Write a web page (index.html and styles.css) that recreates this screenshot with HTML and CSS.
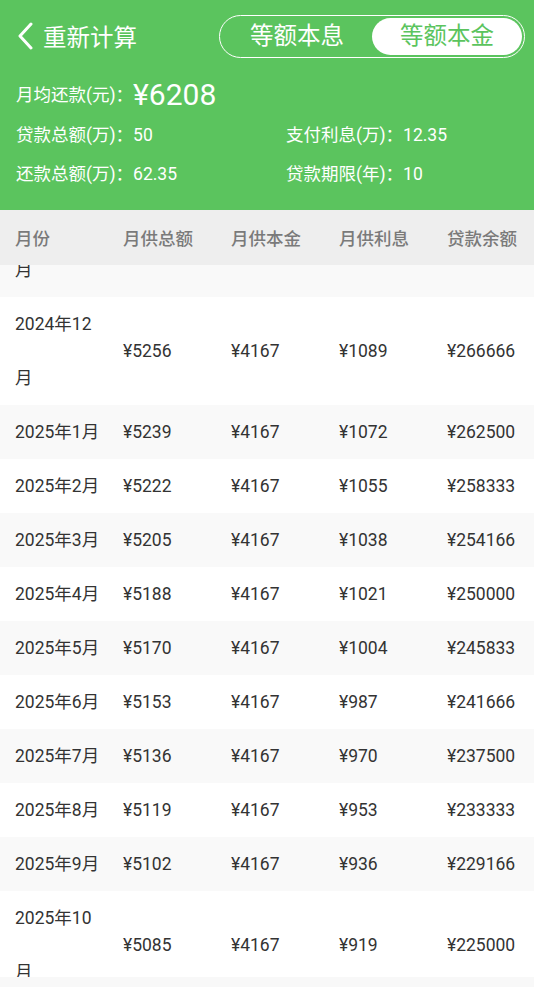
FILE: index.html
```html
<!DOCTYPE html>
<html lang="zh-CN">
<head>
    <meta charset="UTF-8">
    <meta name="viewport" content="width=device-width, initial-scale=1.0">
    <title>还款明细</title>
    <link rel="stylesheet" href="styles.css">
</head>
<body>
    <div class="summary">
        <div class="topbar">
            <div class="back">
                <svg width="17" height="28" viewBox="0 0 17 28">
                    <polyline points="14,2 3,14 14,26" fill="none" stroke="#fff" stroke-width="3" stroke-linecap="round" stroke-linejoin="round"/>
                </svg>
                <span>重新计算</span>
            </div>
            <div class="switch">
                <div class="tab">等额本息</div>
                <div class="tab active">等额本金</div>
            </div>
        </div>
        <div class="monthly">月均还款(元)：<span class="amount">¥6208</span></div>
        <div class="facts">
            <div>贷款总额(万)：50</div>
            <div>支付利息(万)：12.35</div>
            <div>还款总额(万)：62.35</div>
            <div>贷款期限(年)：10</div>
        </div>
    </div>

    <div class="table-head">
        <div>月份</div>
        <div>月供总额</div>
        <div>月供本金</div>
        <div>月供利息</div>
        <div>贷款余额</div>
    </div>

    <div class="table-body">
        <div class="rows">
            <!-- row scrolled mostly out of view -->
            <div class="row"><div>2024年11月</div><div></div><div></div><div></div><div></div></div>
            <div class="row"><div>2024年12月</div><div>¥5256</div><div>¥4167</div><div>¥1089</div><div>¥266666</div></div>
            <div class="row"><div>2025年1月</div><div>¥5239</div><div>¥4167</div><div>¥1072</div><div>¥262500</div></div>
            <div class="row"><div>2025年2月</div><div>¥5222</div><div>¥4167</div><div>¥1055</div><div>¥258333</div></div>
            <div class="row"><div>2025年3月</div><div>¥5205</div><div>¥4167</div><div>¥1038</div><div>¥254166</div></div>
            <div class="row"><div>2025年4月</div><div>¥5188</div><div>¥4167</div><div>¥1021</div><div>¥250000</div></div>
            <div class="row"><div>2025年5月</div><div>¥5170</div><div>¥4167</div><div>¥1004</div><div>¥245833</div></div>
            <div class="row"><div>2025年6月</div><div>¥5153</div><div>¥4167</div><div>¥987</div><div>¥241666</div></div>
            <div class="row"><div>2025年7月</div><div>¥5136</div><div>¥4167</div><div>¥970</div><div>¥237500</div></div>
            <div class="row"><div>2025年8月</div><div>¥5119</div><div>¥4167</div><div>¥953</div><div>¥233333</div></div>
            <div class="row"><div>2025年9月</div><div>¥5102</div><div>¥4167</div><div>¥936</div><div>¥229166</div></div>
            <div class="row"><div>2025年10月</div><div>¥5085</div><div>¥4167</div><div>¥919</div><div>¥225000</div></div>
        </div>
    </div>
    <div class="bottom-strip"></div>
</body>
</html>
```

FILE: styles.css
```css
body {
    font-family: Roboto, "Noto Sans CJK SC", sans-serif;
    margin: 0;
    padding: 0;
    background-color: #fff;
    width: 534px;
    height: 987px;
    overflow: hidden;
}

/* Green summary block */
.summary {
    background-color: #5bc45e;
    color: #fff;
    height: 210px;
    box-sizing: border-box;
    padding-top: 14px;
}

.topbar {
    display: flex;
    justify-content: space-between;
    align-items: center;
    height: 44px;
    padding: 0 9px 0 17px;
}

.back {
    display: flex;
    align-items: center;
    gap: 9px;
    font-size: 23.5px;
}

.back svg {
    display: block;
}

.switch {
    display: flex;
    align-items: center;
    width: 300px;
    height: 41px;
    border: 1.5px solid #fff;
    border-radius: 22px;
    padding: 0 2px;
}

.switch .tab {
    flex: 1;
    text-align: center;
    font-size: 23.5px;
    line-height: 37px;
    border-radius: 19px;
}

.switch .tab.active {
    background-color: #fff;
    color: #5bc45e;
}

.monthly {
    padding-left: 16px;
    margin-top: 19px;
    height: 36px;
    line-height: 36px;
    font-size: 17.5px;
}

.monthly .amount {
    font-size: 30px;
    vertical-align: top;
}

.facts {
    display: grid;
    grid-template-columns: 270px 1fr;
    padding-left: 16px;
    margin-top: 3px;
    font-size: 17.5px;
}

.facts div {
    line-height: 39px;
}

/* Table */
.table-head {
    display: grid;
    grid-template-columns: repeat(5, 108px);
    height: 55px;
    align-items: center;
    background-color: #eeeeee;
    color: #7a7a7a;
    font-size: 17.5px;
    font-weight: 500;
}

.table-head div,
.row div {
    padding-left: 15px;
    box-sizing: border-box;
}

.table-body {
    height: 712px;
    overflow: hidden;
}

.rows {
    margin-top: -76px;
}

.row {
    display: grid;
    grid-template-columns: repeat(5, 108px);
    align-items: center;
    font-size: 17.5px;
    line-height: 54px;
    color: #333;
}

.row:nth-child(odd) {
    background-color: #f9f9f9;
}

.bottom-strip {
    height: 10px;
    background-color: #f8f8f8;
}
```
